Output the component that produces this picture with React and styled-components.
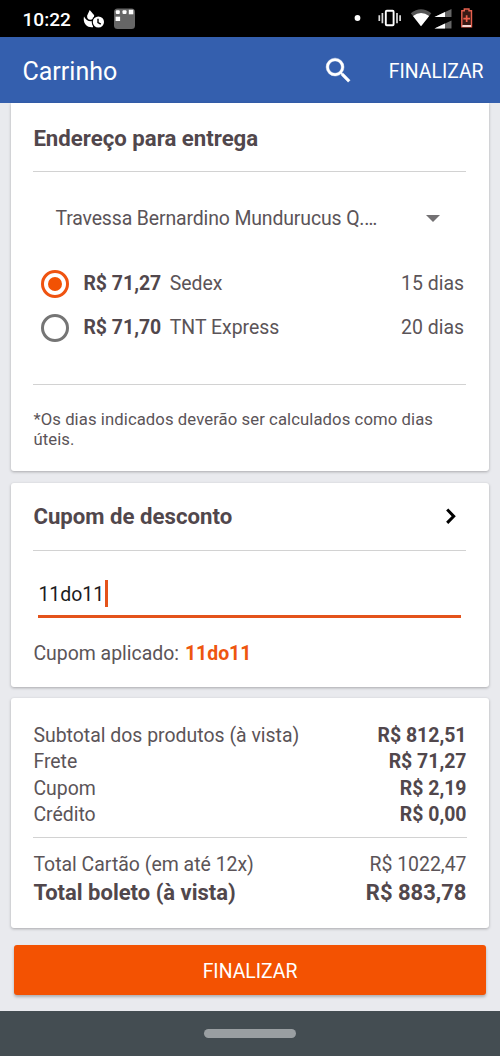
import { useState } from "react";
import styled, { createGlobalStyle } from "styled-components";

const fretes = [
    { nome: "Sedex", preco: "R$ 71,27", prazo: "15 dias" },
    { nome: "TNT Express", preco: "R$ 71,70", prazo: "20 dias" },
];

const resumo = [
    { nome: "Subtotal dos produtos (à vista)", valor: "R$ 812,51" },
    { nome: "Frete", valor: "R$ 71,27" },
    { nome: "Cupom", valor: "R$ 2,19" },
    { nome: "Crédito", valor: "R$ 0,00" },
];

const App = () => {
    const [frete, setFrete] = useState("Sedex");

    return (
        <Screen>
            <GlobalStyle />
            <StatusBar>
                <Clock>10:22</Clock>
                <StatusIcons width="54" height="37" viewBox="83 0 54 37">
                    <path d="M89.700 10L94.200 15.200C94.200 18 92.500 19.800 90.300 19.800C88 19.800 86.700 17.800 87.200 15.500Z" fill="#fff" />
                    <path d="M84 16.500C86 20 88.500 22 93 21V27.200C87 28 82.600 23.500 84 16.500Z" fill="#fff" />
                    <circle cx="98.400" cy="22" r="6.700" fill="#000" />
                    <circle cx="98.400" cy="22" r="5.600" fill="#fff" />
                    <path d="M98 18.700V22.500L100.800 24.200" stroke="#000" strokeWidth="1.400" fill="none" />
                    <rect x="114" y="8.500" width="21" height="20.500" rx="3.500" fill="#666" />
                    <rect x="115.800" y="10.300" width="4" height="3.700" rx="1" fill="#fff" />
                    <rect x="122.500" y="10.300" width="4" height="3.700" rx="1" fill="#fff" />
                    <rect x="128.800" y="9.800" width="4.500" height="4.500" fill="#fff" />
                    <rect x="115.600" y="16.700" width="4.500" height="4.300" fill="#fff" />
                </StatusIcons>
                <Spacer />
                <StatusIcons width="120" height="37" viewBox="354 0 120 37">
                    <circle cx="357.500" cy="18" r="2.900" fill="#fff" />
                    <rect x="385.800" y="10.700" width="7.800" height="14.600" rx="1" stroke="#fff" strokeWidth="1.900" fill="none" />
                    <path d="M382.400 13V23.300M397 13V23.300M379.300 15.300V21M400.100 15.300V21" stroke="#ddd" strokeWidth="1.700" />
                    <path d="M410.800 13.200Q421 5.500 431.300 13.200L421 26.300Z" fill="#555" />
                    <path d="M413 16Q421 10 429.200 16L421 26.300Z" fill="#fff" />
                    <path d="M434.500 17L451.500 9V17Z" fill="#666" />
                    <path d="M434.500 17L445 12.060V17Z" fill="#fff" />
                    <path d="M434.500 28.500L451.500 20.500V28.500Z" fill="#666" />
                    <path d="M434.500 28.500L445 23.560V28.500Z" fill="#fff" />
                    <path d="M461.800 10.700H464.300V9H469V10.700H471.500V26.700H461.800Z" fill="#3a1a15" stroke="#e5604e" strokeWidth="1.400" />
                    <rect x="462.300" y="25" width="8.700" height="2" fill="#f6d8d2" />
                    <path d="M466.650 15.300V22M463.300 18.700H470" stroke="#f0604c" strokeWidth="1.700" />
                </StatusIcons>
            </StatusBar>
            <Header>
                <HeaderTitle>Carrinho</HeaderTitle>
                <Spacer />
                <SearchIcon width="33" height="33" viewBox="0 0 24 24">
                    <path fill="#fff" stroke="#fff" strokeWidth="0.300" d="M15.500 14h-.79l-.28-.27A6.471 6.471 0 0 0 16 9.500 6.500 6.500 0 1 0 9.500 16c1.610 0 3.090-.59 4.230-1.570l.27.28v.79l5 4.990L20.490 19l-4.990-5zm-6 0C7.010 14 5 11.990 5 9.500S7.010 5 9.500 5 14 7.010 14 9.500 11.990 14 9.500 14z" />
                </SearchIcon>
                <HeaderAction>FINALIZAR</HeaderAction>
            </Header>
            <Content>
                <DeliveryCard>
                    <CardTitle>Endereço para entrega</CardTitle>
                    <Divider />
                    <AddressSelect>
                        <span>Travessa Bernardino Mundurucus Q.…</span>
                        <svg width="14" height="7" viewBox="0 0 14 7">
                            <path d="M0 0H14L7 7Z" fill="#737173" />
                        </svg>
                    </AddressSelect>
                    <Options>
                        {fretes.map((item) => (
                            <Option key={item.nome} onClick={() => setFrete(item.nome)}>
                                <Radio $checked={frete === item.nome} />
                                <OptionPrice>{item.preco}</OptionPrice>
                                <OptionName>{item.nome}</OptionName>
                                <span>{item.prazo}</span>
                            </Option>
                        ))}
                    </Options>
                    <Divider />
                    <Note>*Os dias indicados deverão ser calculados como dias úteis.</Note>
                </DeliveryCard>
                <CouponCard>
                    <CouponHeader>
                        <CardTitle>Cupom de desconto</CardTitle>
                        <svg width="12" height="18" viewBox="0 0 12 18">
                            <path d="M2.200 2.500L8.700 9.200L2.200 15.900" fill="none" stroke="#000" strokeWidth="3" />
                        </svg>
                    </CouponHeader>
                    <Divider />
                    <CouponField>
                        <span>11do11</span>
                        <Caret />
                    </CouponField>
                    <CouponApplied>
                        Cupom aplicado: <b>11do11</b>
                    </CouponApplied>
                </CouponCard>
                <SummaryCard>
                    {resumo.map((item) => (
                        <SummaryRow key={item.nome}>
                            <span>{item.nome}</span>
                            <b>{item.valor}</b>
                        </SummaryRow>
                    ))}
                    <SummaryDivider />
                    <SummaryRow>
                        <span>Total Cartão (em até 12x)</span>
                        <span>R$ 1022,47</span>
                    </SummaryRow>
                    <TotalRow>
                        <span>Total boleto (à vista)</span>
                        <span>R$ 883,78</span>
                    </TotalRow>
                </SummaryCard>
                <CheckoutButton>FINALIZAR</CheckoutButton>
            </Content>
            <NavigationBar>
                <HomePill />
            </NavigationBar>
        </Screen>
    )
};

const GlobalStyle = createGlobalStyle`
    * {
        box-sizing: border-box;
    }
    body {
        margin: 0;
        font-family: Roboto, sans-serif;
        color: #5b5458;
    }
`
const Screen = styled.div`
    width: 500px;
    height: 1056px;
    display: flex;
    flex-direction: column;
    overflow: hidden;
    background-color: #e9eaee;
    font-size: 19.45px;
`
const Spacer = styled.div`
    flex: 1;
`
const StatusBar = styled.div`
    height: 37px;
    flex-shrink: 0;
    padding: 0 26px 0 22.5px;
    display: flex;
    align-items: center;
    background-color: #000;
    color: #fff;
`
const Clock = styled.span`
    width: 60.5px;
    padding-top: 1px;
    font-size: 19.1px;
    font-weight: 500;
`
const StatusIcons = styled.svg`
    flex-shrink: 0;
`
const Header = styled.header`
    height: 66px;
    flex-shrink: 0;
    padding: 2px 16.5px 0 22.5px;
    display: flex;
    align-items: center;
    background-color: #345fae;
    color: #fff;
`
const HeaderTitle = styled.h1`
    margin: 0;
    font-size: 25px;
    font-weight: 400;
`
const SearchIcon = styled.svg`
    margin-right: 34px;
    margin-bottom: 2px;
`
const HeaderAction = styled.span`
    font-size: 19.4px;
`
const Content = styled.main`
    height: 908px;
    flex-shrink: 0;
    padding: 0 11px;
    display: flex;
    flex-direction: column;
`
const Card = styled.section`
    flex-shrink: 0;
    padding: 0 23px 0 22.4px;
    border-radius: 3px;
    background-color: #fff;
    box-shadow: 0 1px 3px rgba(0, 0, 0, 0.28);
`
const DeliveryCard = styled(Card)`
    height: 368px;
    margin-bottom: 12px;
    padding-top: 20px;
    border-radius: 0 0 3px 3px;
`
const CouponCard = styled(Card)`
    height: 204px;
    margin-bottom: 11px;
    padding-top: 18px;
`
const SummaryCard = styled(Card)`
    height: 230px;
    margin-bottom: 17px;
    padding-top: 24px;
    padding-right: 22.5px;
`
const CardTitle = styled.h2`
    margin: 0;
    font-size: 22.2px;
    font-weight: 700;
    line-height: 30px;
    color: #51474c;
`
const Divider = styled.div`
    height: 1px;
    margin-top: 18px;
    background-color: #d2d2d2;
`
const AddressSelect = styled.div`
    height: 46px;
    margin-top: 23px;
    padding: 0 26px 0 22px;
    display: flex;
    align-items: center;
    justify-content: space-between;
    letter-spacing: -0.13px;
`
const Options = styled.div`
    margin-top: 20.5px;
    margin-bottom: 34px;
`
const Option = styled.div`
    height: 44.250px;
    padding: 0 2px 0 8px;
    display: flex;
    align-items: center;
`
const Radio = styled.span`
    width: 28px;
    height: 28px;
    display: flex;
    align-items: center;
    justify-content: center;
    border: 3px solid ${(props) => (props.$checked ? "#ef5310" : "#757575")};
    border-radius: 50%;

    &::after {
        content: "";
        width: 14px;
        height: 14px;
        border-radius: 50%;
        background-color: ${(props) => (props.$checked ? "#f25204" : "transparent")};
    }
`
const OptionPrice = styled.b`
    margin-left: 14px;
    color: #51474c;
`
const OptionName = styled.span`
    flex: 1;
    margin-left: 8.5px;
`
const Note = styled.p`
    margin: 25px 0 0;
    font-size: 16.7px;
    letter-spacing: 0.08px;
    line-height: 19.5px;
`
const CouponHeader = styled.div`
    padding-right: 9px;
    display: flex;
    align-items: center;
    justify-content: space-between;

    & + ${Divider} {
        margin-top: 19px;
    }
`
const CouponField = styled.div`
    height: 43px;
    margin: 24px 5px 0;
    padding-bottom: 1px;
    display: flex;
    align-items: center;
    border-bottom: 3px solid #e4531b;
    color: #1c1c1c;
`
const Caret = styled.span`
    width: 3px;
    height: 27px;
    margin-left: 0.500px;
    margin-bottom: 2px;
    background-color: #e4531b;
`
const CouponApplied = styled.p`
    margin: 24px 0 0;
    line-height: 24px;

    b {
        margin-left: 1px;
        color: #ee560f;
    }
`
const SummaryRow = styled.div`
    height: 26.500px;
    display: flex;
    align-items: center;
    justify-content: space-between;

    b {
        color: #51474c;
    }
`
const SummaryDivider = styled(Divider)`
    margin-top: 9px;
    margin-bottom: 13px;
`
const TotalRow = styled(SummaryRow)`
    height: 29px;
    font-size: 22px;
    font-weight: 700;
    color: #51474c;
`
const CheckoutButton = styled.button`
    height: 50px;
    margin: 0 3px;
    padding: 2px 0 0;
    flex-shrink: 0;
    border: none;
    border-radius: 3px;
    background-color: #f35202;
    box-shadow: 0 2px 3px rgba(0, 0, 0, 0.25);
    color: #fff;
    font-family: inherit;
    font-size: 19.4px;
`
const NavigationBar = styled.div`
    height: 45px;
    flex-shrink: 0;
    display: flex;
    align-items: center;
    justify-content: center;
    background-color: #444d52;
`
const HomePill = styled.div`
    width: 92px;
    height: 9px;
    border-radius: 5px;
    background-color: #9a9fa2;
`

export default App;
